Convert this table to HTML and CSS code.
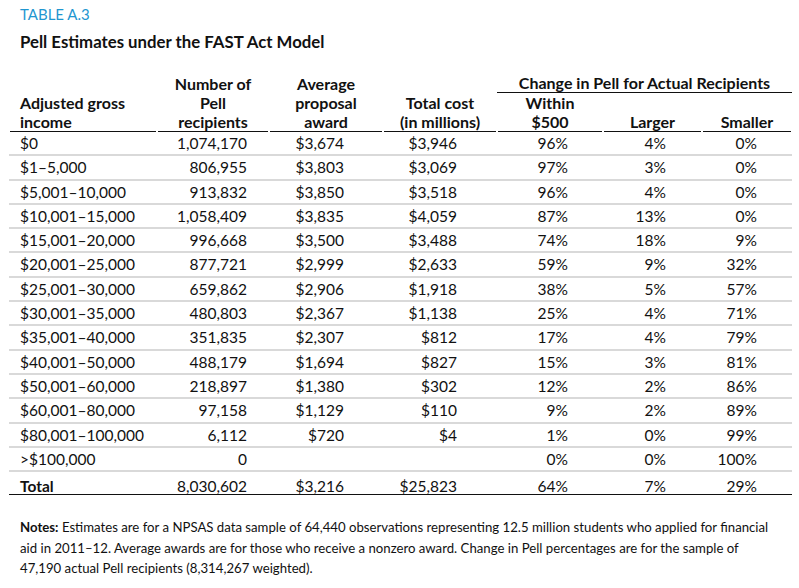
FILE: index.html
```html
<!DOCTYPE html>
<html lang="en">
<head>
<meta charset="utf-8">
<title>Table A.3</title>
<link rel="stylesheet" href="styles.css">
</head>
<body>
<div class="page">
  <div class="label">TABLE A.3</div>
  <h1 class="title">Pell Estimates under the FAST Act Model</h1>
  <table class="data">
    <colgroup>
      <col class="w1"><col class="w2"><col class="w3"><col class="w4"><col class="w5"><col class="w6"><col class="w7">
    </colgroup>
    <thead>
      <tr>
        <th rowspan="2" class="h-left h-bottom">Adjusted gross<br>income</th>
        <th rowspan="2" class="h-bottom">Number of<br>Pell<br>recipients</th>
        <th rowspan="2" class="h-bottom">Average<br>proposal<br>award</th>
        <th rowspan="2" class="h-bottom">Total cost<br>(in millions)</th>
        <th colspan="3" class="h-group">Change in Pell for Actual Recipients</th>
      </tr>
      <tr>
        <th class="h-bottom">Within<br>$500</th>
        <th class="h-bottom">Larger</th>
        <th class="h-bottom">Smaller</th>
      </tr>
    </thead>
    <tbody>
      <tr><td>$0</td><td>1,074,170</td><td>$3,674</td><td>$3,946</td><td>96%</td><td>4%</td><td>0%</td></tr>
      <tr><td>$1–5,000</td><td>806,955</td><td>$3,803</td><td>$3,069</td><td>97%</td><td>3%</td><td>0%</td></tr>
      <tr><td>$5,001–10,000</td><td>913,832</td><td>$3,850</td><td>$3,518</td><td>96%</td><td>4%</td><td>0%</td></tr>
      <tr><td>$10,001–15,000</td><td>1,058,409</td><td>$3,835</td><td>$4,059</td><td>87%</td><td>13%</td><td>0%</td></tr>
      <tr><td>$15,001–20,000</td><td>996,668</td><td>$3,500</td><td>$3,488</td><td>74%</td><td>18%</td><td>9%</td></tr>
      <tr><td>$20,001–25,000</td><td>877,721</td><td>$2,999</td><td>$2,633</td><td>59%</td><td>9%</td><td>32%</td></tr>
      <tr><td>$25,001–30,000</td><td>659,862</td><td>$2,906</td><td>$1,918</td><td>38%</td><td>5%</td><td>57%</td></tr>
      <tr><td>$30,001–35,000</td><td>480,803</td><td>$2,367</td><td>$1,138</td><td>25%</td><td>4%</td><td>71%</td></tr>
      <tr><td>$35,001–40,000</td><td>351,835</td><td>$2,307</td><td>$812</td><td>17%</td><td>4%</td><td>79%</td></tr>
      <tr><td>$40,001–50,000</td><td>488,179</td><td>$1,694</td><td>$827</td><td>15%</td><td>3%</td><td>81%</td></tr>
      <tr><td>$50,001–60,000</td><td>218,897</td><td>$1,380</td><td>$302</td><td>12%</td><td>2%</td><td>86%</td></tr>
      <tr><td>$60,001–80,000</td><td>97,158</td><td>$1,129</td><td>$110</td><td>9%</td><td>2%</td><td>89%</td></tr>
      <tr><td>$80,001–100,000</td><td>6,112</td><td>$720</td><td>$4</td><td>1%</td><td>0%</td><td>99%</td></tr>
      <tr><td>&gt;$100,000</td><td>0</td><td></td><td></td><td>0%</td><td>0%</td><td>100%</td></tr>
    </tbody>
    <tfoot>
      <tr class="total"><td>Total</td><td>8,030,602</td><td>$3,216</td><td>$25,823</td><td>64%</td><td>7%</td><td>29%</td></tr>
    </tfoot>
  </table>
  <p class="notes"><strong>Notes:</strong> Estimates are for a NPSAS data sample of 64,440 observations representing 12.5 million students who applied for financial aid in 2011–12. Average awards are for those who receive a nonzero award. Change in Pell percentages are for the sample of 47,190 actual Pell recipients (8,314,267 weighted).</p>
</div>
</body>
</html>
```

FILE: styles.css
```css
* { box-sizing: border-box; }

html, body {
  margin: 0;
  padding: 0;
  background: #ffffff;
}

body {
  font-family: Lato, "Open Sans", "Liberation Sans", sans-serif;
  color: #111111;
}

.page {
  width: 799px;
  padding: 0 7px 0 9px;
}

.label {
  margin: 5px 0 0 11px;
  font-size: 15px;
  line-height: 18px;
  color: #1f96d0;
}

.title {
  margin: 8px 0 0 11px;
  font-size: 16.8px;
  line-height: 22px;
  font-weight: 700;
}

.data {
  margin-top: 21px;
  width: 783px;
  border-collapse: separate;
  border-spacing: 0;
  table-layout: fixed;
  font-size: 15.5px;
}

.w1 { width: 148px; }
.w2 { width: 112px; }
.w3 { width: 114px; }
.w4 { width: 114px; }
.w5 { width: 106px; }
.w6 { width: 99px; }
.w7 { width: 90px; }

.data th {
  font-size: 16px;
  font-weight: 700;
  line-height: 19px;
  text-align: center;
  padding: 0;
  vertical-align: bottom;
  white-space: nowrap;
}

.data th.h-left {
  text-align: left;
  padding-left: 11px;
}

.data th.h-bottom {
  border-bottom: 1px solid transparent;
  background: linear-gradient(#111111, #111111) center bottom / calc(100% - 2px) 1px no-repeat border-box;
}

.data th.h-group {
  line-height: 18px;
  border-bottom: 1px solid #111111;
}

.data td {
  line-height: 22.3px;
  padding: 0;
  text-align: right;
  border-bottom: 2px solid #d9d9d9;
  white-space: nowrap;
}

.data td:nth-child(1) { text-align: left; padding-left: 11px; }
.data td:nth-child(2) { padding-right: 22px; }
.data td:nth-child(3) { padding-right: 39px; }
.data td:nth-child(4) { padding-right: 40px; }
.data td:nth-child(5) { padding-right: 35px; }
.data td:nth-child(6) { padding-right: 36px; }
.data td:nth-child(7) { padding-right: 35px; }

.data .total td {
  line-height: 15px;
  padding-top: 7px;
  border-bottom: 1px solid #111111;
}

.data .total td:first-child {
  font-weight: 700;
}

.notes {
  margin: 22px 0 0 11px;
  font-size: 13.2px;
  line-height: 20.5px;
  width: 755px;
}

.notes strong {
  font-weight: 700;
}
```
